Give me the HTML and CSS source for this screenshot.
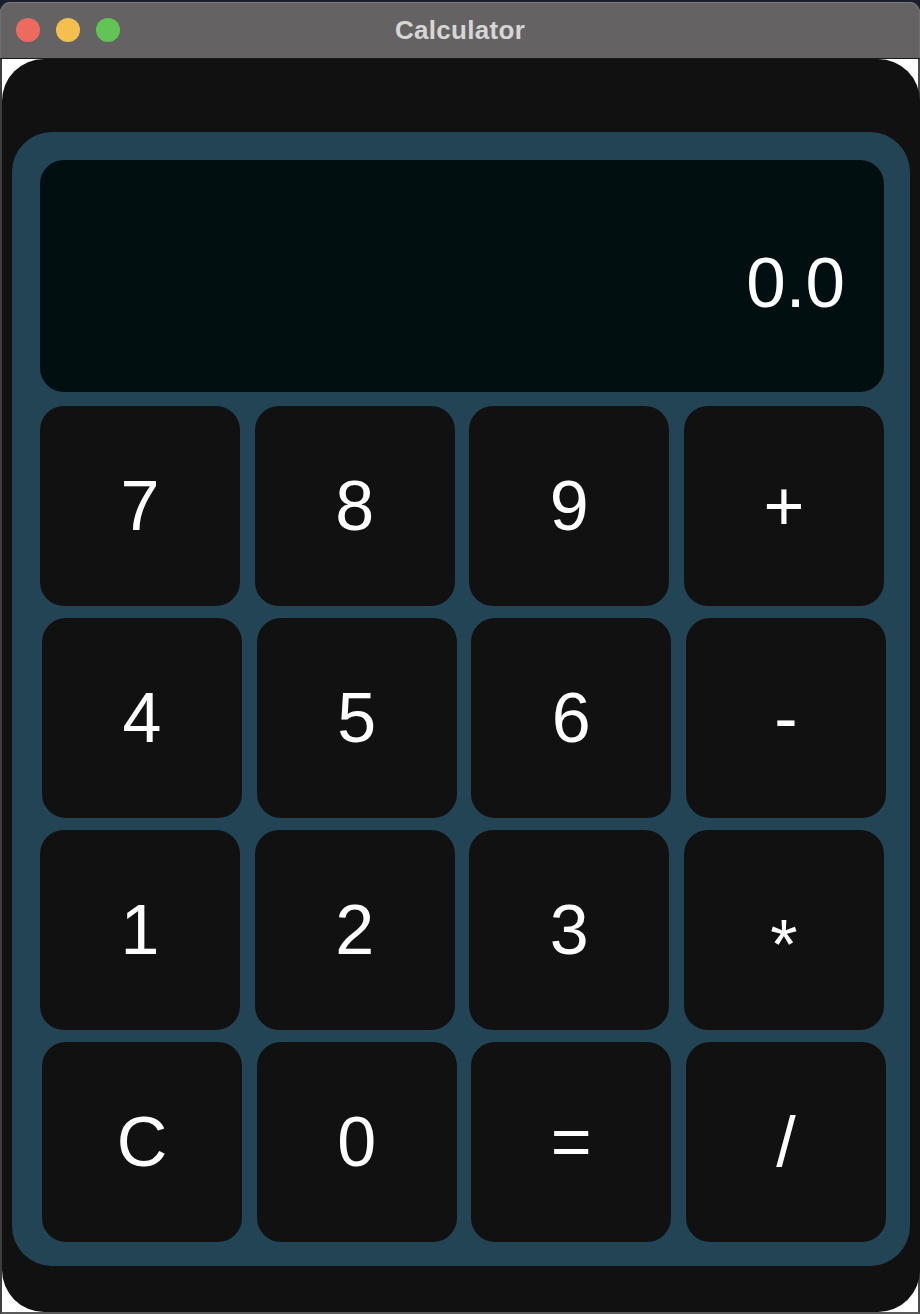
FILE: index.html
```html
<!DOCTYPE html>
<html>
<head>
<meta charset="utf-8">
<title>Calculator</title>
<link rel="stylesheet" href="styles.css">
</head>
<body>
<div class="window">
  <div class="titlebar">
    <div class="lights">
      <span class="light red"></span>
      <span class="light yellow"></span>
      <span class="light green"></span>
    </div>
    <div class="title">Calculator</div>
  </div>
  <div class="content">
    <div class="app">
      <div class="panel">
        <div class="display"><span class="value">0.0</span></div>
        <div class="keypad">
          <div class="row">
            <button class="key">7</button>
            <button class="key">8</button>
            <button class="key">9</button>
            <button class="key">+</button>
          </div>
          <div class="row shifted">
            <button class="key">4</button>
            <button class="key">5</button>
            <button class="key">6</button>
            <button class="key">-</button>
          </div>
          <div class="row">
            <button class="key">1</button>
            <button class="key">2</button>
            <button class="key">3</button>
            <button class="key star">*</button>
          </div>
          <div class="row shifted">
            <button class="key">C</button>
            <button class="key">0</button>
            <button class="key">=</button>
            <button class="key">/</button>
          </div>
        </div>
      </div>
    </div>
  </div>
</div>
</body>
</html>
```
FILE: styles.css
```css
html, body {
  margin: 0;
  padding: 0;
}
body {
  background: #1b1f2b;
  width: 920px;
  height: 1314px;
  overflow: hidden;
  font-family: "Liberation Sans", Arial, sans-serif;
}
.window {
  padding-top: 2px;
  display: flex;
  flex-direction: column;
  height: 1312px;
}
.titlebar {
  position: relative;
  height: 56px;
  background: #646262;
  border-radius: 11px 11px 0 0;
  border-bottom: 1px solid #1a1a1a;
  box-shadow: inset 0 1px 0 #7c7b7b, inset 1px 0 0 #6f6e6e, inset -1px 0 0 #6f6e6e;
  display: flex;
  align-items: center;
  justify-content: center;
}
.lights {
  position: absolute;
  left: 16px;
  top: 16px;
  display: flex;
  gap: 16px;
}
.light {
  width: 24px;
  height: 24px;
  border-radius: 50%;
  display: block;
}
.red { background: #ed6a5e; }
.yellow { background: #f5bf4f; }
.green { background: #61c454; }
.title {
  color: #d7d6d6;
  font-weight: bold;
  font-size: 26px;
  letter-spacing: 0.3px;
  margin-top: 1px;
}
.content {
  flex: 1;
  background: #ffffff;
  border-left: 2px solid #3d3d3d;
  border-right: 2px solid #4a4a4a;
  border-bottom: 2px solid #5a5a5a;
  display: flex;
}
.app {
  flex: 1;
  background: #111111;
  border-radius: 42px;
  padding: 73px 10px 44px 10px;
}
.panel {
  background: #234455;
  border-radius: 40px;
  padding: 28px 24px 24px 28px;
  height: 1134px;
  box-sizing: border-box;
}
.display {
  width: 844px;
  height: 232px;
  box-sizing: border-box;
  background: #010f10;
  border-radius: 24px;
  display: flex;
  justify-content: flex-end;
  align-items: flex-start;
  padding: 87px 39px 0 0;
}
.value {
  color: #ffffff;
  font-size: 71px;
  line-height: 72px;
}
.keypad {
  margin-top: 14px;
  display: flex;
  flex-direction: column;
  gap: 12px;
}
.row {
  display: grid;
  grid-template-columns: repeat(4, 200px);
  column-gap: 14.67px;
}
.row.shifted {
  padding-left: 2px;
}
.key {
  height: 200px;
  border: none;
  margin: 0;
  padding: 0;
  background: #111111;
  border-radius: 24px;
  color: #ffffff;
  font-family: "Liberation Sans", Arial, sans-serif;
  font-size: 70px;
  line-height: 1;
  display: flex;
  align-items: center;
  justify-content: center;
}
.key.star {
  padding-top: 30px;
}
```
